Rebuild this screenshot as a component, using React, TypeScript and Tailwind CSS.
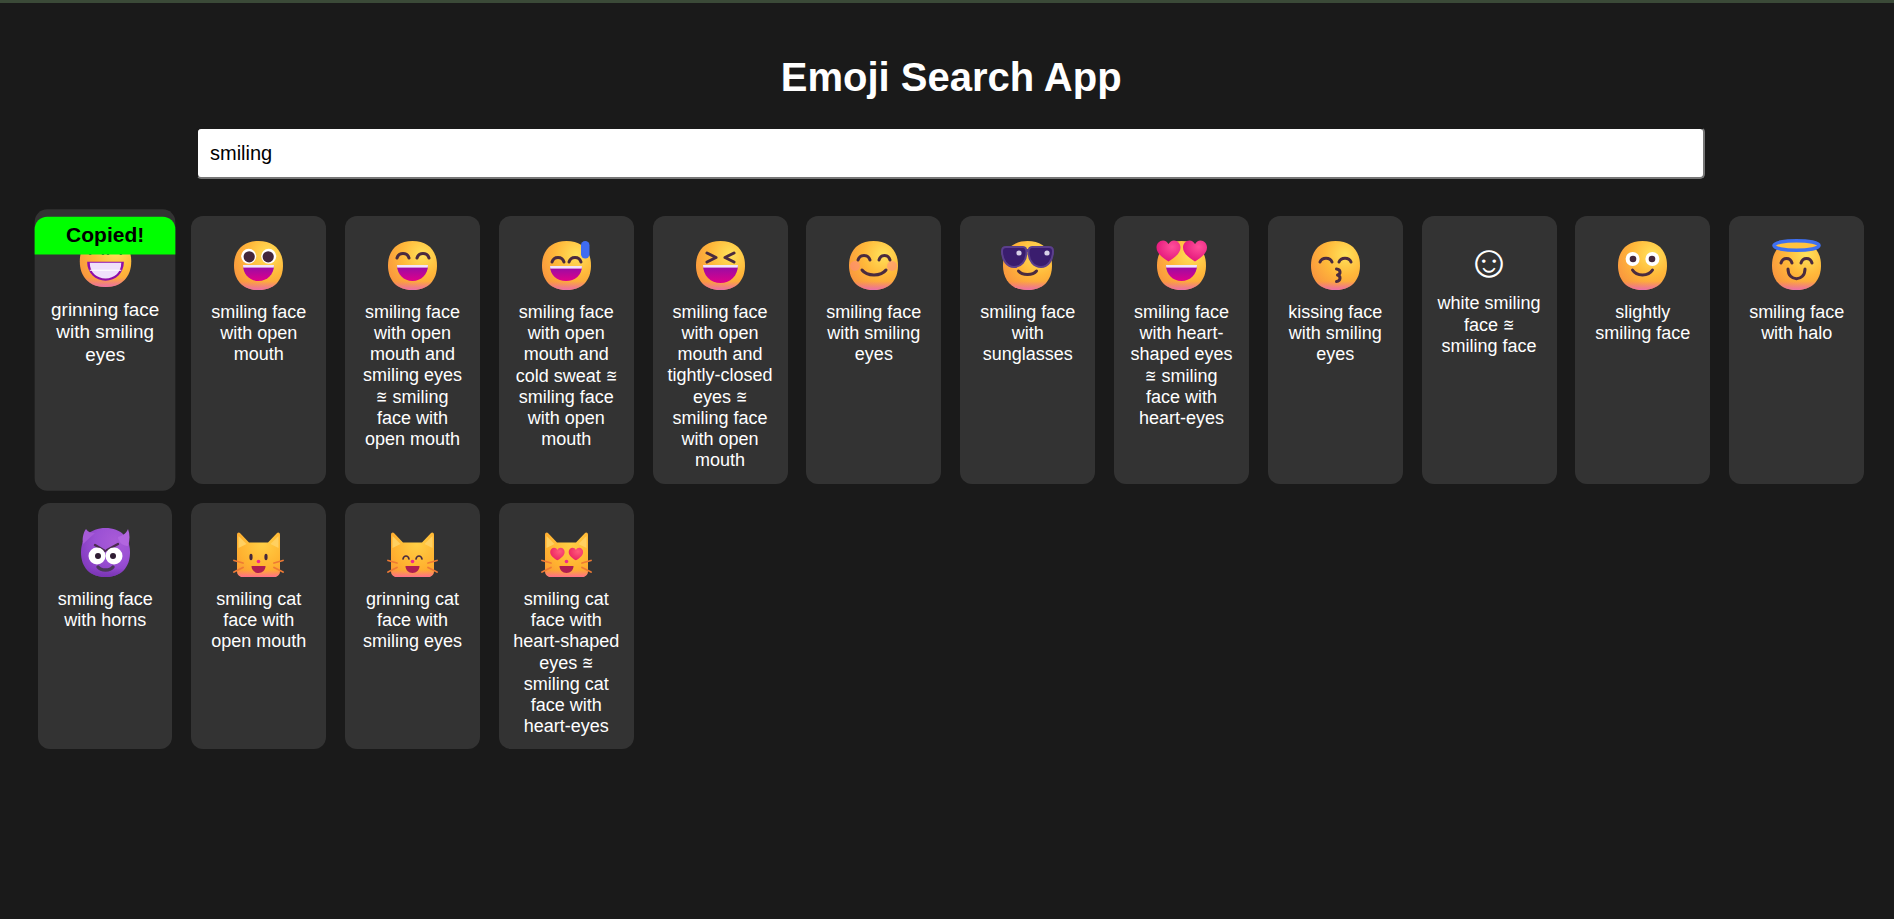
import type { ReactNode } from "react";

const INK = "#4a2b3f";

function Arc({ x, y, w = 12, h = 6, color = INK, sw = 3 }: { x: number; y: number; w?: number; h?: number; color?: string; sw?: number }) {
  return (
    <path
      d={`M${x} ${y + h}C${x + w * 0.15} ${y} ${x + w * 0.85} ${y} ${x + w} ${y + h}`}
      fill="none"
      stroke={color}
      strokeWidth={sw}
      strokeLinecap="round"
    />
  );
}

function Smile({ x, y, w, h, sw = 3 }: { x: number; y: number; w: number; h: number; sw?: number }) {
  return (
    <path
      d={`M${x} ${y}C${x + w * 0.2} ${y + h * 1.3} ${x + w * 0.8} ${y + h * 1.3} ${x + w} ${y}`}
      fill="none"
      stroke={INK}
      strokeWidth={sw}
      strokeLinecap="round"
    />
  );
}

function Mouth({ id, x = 9, y = 24, w = 31, h = 16 }: { id: string; x?: number; y?: number; w?: number; h?: number }) {
  const shape = `M${x} ${y}H${x + w}C${x + w} ${y + h * 0.6} ${x + w * 0.78} ${y + h} ${x + w / 2} ${y + h}C${x + w * 0.22} ${y + h} ${x} ${y + h * 0.6} ${x} ${y}Z`;
  return (
    <g>
      <defs>
        <linearGradient id={`${id}-mouth`} x1="0" y1="0" x2="0" y2="1">
          <stop offset="0" stopColor="#8f0ea8" />
          <stop offset="1" stopColor="#e0008a" />
        </linearGradient>
        <clipPath id={`${id}-clip`}>
          <path d={shape} />
        </clipPath>
      </defs>
      <path d={shape} fill={`url(#${id}-mouth)`} />
      <rect x={x} y={y} width={w} height="2.6" fill="#f3e4fb" clipPath={`url(#${id}-clip)`} />
    </g>
  );
}

function Heart({ id, x, y, s, from = "#ff4f9a", to = "#e00f78" }: { id: string; x: number; y: number; s: number; from?: string; to?: string }) {
  return (
    <g transform={`translate(${x} ${y}) scale(${s})`}>
      <defs>
        <radialGradient id={`${id}-heart`} cx="0.65" cy="0.3" r="0.8">
          <stop offset="0" stopColor={from} />
          <stop offset="1" stopColor={to} />
        </radialGradient>
      </defs>
      <path
        d="M11.5 20.5C7 17.5 -0.5 13 -0.5 6.5C-0.5 2.5 2.5 -0.5 6 -0.5C8.4 -0.5 10.4 1 11.5 3.2C12.6 1 14.6 -0.5 17 -0.5C20.5 -0.5 23.5 2.5 23.5 6.5C23.5 13 16 17.5 11.5 20.5Z"
        fill={`url(#${id}-heart)`}
      />
    </g>
  );
}

const FACE_SHAPE = "M24.5 0C40 0 49 9.5 49 24.5C49 39.5 40 49 24.5 49C9 49 0 39.5 0 24.5C0 9.5 9 0 24.5 0Z";

function Face({ id, purple, children }: { id: string; purple?: boolean; children?: ReactNode }) {
  return (
    <svg viewBox="0 0 49 49" className="block mx-auto w-[49px] h-[49px] overflow-visible">
      <defs>
        <radialGradient id={`${id}-base`} cx="0.7" cy="0.28" r="0.85">
          <stop offset="0" stopColor={purple ? "#a95bd8" : "#ffe25a"} />
          <stop offset="0.5" stopColor={purple ? "#9a50d4" : "#ffb83a"} />
          <stop offset="1" stopColor={purple ? "#8038bc" : "#f8923f"} />
        </radialGradient>
        <linearGradient id={`${id}-low`} x1="0" y1="0" x2="0" y2="1">
          <stop offset="0.82" stopColor={purple ? "#7a35b4" : "#f0709c"} stopOpacity="0" />
          <stop offset="1" stopColor={purple ? "#7a35b4" : "#ea6fa8"} stopOpacity="1" />
        </linearGradient>
      </defs>
      <path d={FACE_SHAPE} fill={`url(#${id}-base)`} />
      <path d={FACE_SHAPE} fill={`url(#${id}-low)`} />
      {children}
    </svg>
  );
}

const CAT_HEAD = "M3 7C3 4.5 5 4 6.2 5.2L15 14.5H34L42.8 5.2C44 4 46 4.5 46 7V43C46 46.5 43.5 49 40 49H9C5.5 49 3 46.5 3 43Z";

function Cat({ id, children }: { id: string; children?: ReactNode }) {
  const whiskers = "M0 32.5L9 35M0 44L9 39.5M49 32.5L40 35M49 44L40 39.5";
  return (
    <svg viewBox="0 0 49 49" className="block mx-auto w-[49px] h-[49px] overflow-visible">
      <defs>
        <radialGradient id={`${id}-cat`} cx="0.6" cy="0.25" r="0.85">
          <stop offset="0" stopColor="#ffcf45" />
          <stop offset="0.65" stopColor="#ffb230" />
          <stop offset="1" stopColor="#fb9a35" />
        </radialGradient>
        <linearGradient id={`${id}-catlow`} x1="0" y1="0" x2="0" y2="1">
          <stop offset="0.84" stopColor="#ff7a8a" stopOpacity="0" />
          <stop offset="1" stopColor="#ff7088" stopOpacity="1" />
        </linearGradient>
      </defs>
      <path d={CAT_HEAD} fill={`url(#${id}-cat)`} />
      <path d={CAT_HEAD} fill={`url(#${id}-catlow)`} />
      <path d="M4.5 8L12.5 16L4.5 20Z" fill="#ffd060" />
      <path d="M44.5 8L36.5 16L44.5 20Z" fill="#ffd060" />
      <path d={whiskers} fill="none" stroke="#ee7a34" strokeWidth="1.8" strokeLinecap="round" />
      <circle cx="24.5" cy="33.5" r="1.8" fill="#f0288c" />
      <path d="M17.5 38H31.5C31.5 42 28.5 45 24.5 45C20.5 45 17.5 42 17.5 38Z" fill="#b01e50" />
      {children}
    </svg>
  );
}

const emojis: { label: string; icon: ReactNode; textGlyph?: boolean }[] = [
  {
    label: "grinning face with smiling eyes",
    icon: (
      <Face id="grin">
        <Arc x={10} y={11} />
        <Arc x={27} y={11} />
        <path d="M7 25H42C42 36 34 43 24.5 43C15 43 7 36 7 25Z" fill="#8f0ea8" />
        <path d="M9.5 26H39.5C39.5 35 33 41 24.5 41C16 41 9.5 35 9.5 26Z" fill="#efe0fb" />
        <path d="M9.5 33H39.5" stroke="#fff" strokeWidth="1" />
      </Face>
    ),
  },
  {
    label: "smiling face with open mouth",
    icon: (
      <Face id="open">
        <circle cx="14.7" cy="15.3" r="7.5" fill="#fff" />
        <circle cx="34.7" cy="15.3" r="7.5" fill="#fff" />
        <circle cx="15.2" cy="15.8" r="5.6" fill="#43273b" />
        <circle cx="34.2" cy="15.8" r="5.6" fill="#43273b" />
        <Mouth id="open" />
      </Face>
    ),
  },
  {
    label: "smiling face with open mouth and smiling eyes ≊ smiling face with open mouth",
    icon: (
      <Face id="eyes">
        <Arc x={9} y={11} />
        <Arc x={29} y={11} />
        <Mouth id="eyes" />
      </Face>
    ),
  },
  {
    label: "smiling face with open mouth and cold sweat ≊ smiling face with open mouth",
    icon: (
      <Face id="sweat">
        <Arc x={10} y={15} />
        <Arc x={27} y={15} />
        <Mouth id="sweat" x={8} y={25} w={32} h={15} />
        <rect x="39" y="0" width="8.5" height="17.5" rx="4.2" fill="#3f6cf0" />
      </Face>
    ),
  },
  {
    label: "smiling face with open mouth and tightly-closed eyes ≊ smiling face with open mouth",
    icon: (
      <Face id="tight">
        <path d="M11 12L20 16.5L11 21M38 12L29 16.5L38 21" fill="none" stroke={INK} strokeWidth="3" strokeLinecap="round" strokeLinejoin="round" />
        <Mouth id="tight" x={7} y={24} w={35} h={18} />
      </Face>
    ),
  },
  {
    label: "smiling face with smiling eyes",
    icon: (
      <Face id="soft">
        <circle cx="6" cy="25" r="5" fill="#ff8a80" opacity="0.55" />
        <circle cx="43" cy="25" r="5" fill="#ff8a80" opacity="0.55" />
        <Arc x={9} y={13} />
        <Arc x={30} y={13} w={11} />
        <Smile x={13} y={29} w={24} h={5} />
      </Face>
    ),
  },
  {
    label: "smiling face with sunglasses",
    icon: (
      <Face id="shades">
        <path d="M22 9.5H27" stroke="#5b3f8c" strokeWidth="3" fill="none" />
        <path d="M-1 10C-1 7 1 6 3 6H20C23 6 23.5 8 23.5 11C23.5 20 18 26 11 26C4 26 -1 19 -1 10Z" fill="#3a1d6e" stroke="#5b3f8c" strokeWidth="2" />
        <path d="M50 10C50 7 48 6 46 6H29C26 6 25.5 8 25.5 11C25.5 20 31 26 38 26C45 26 50 19 50 10Z" fill="#3a1d6e" stroke="#5b3f8c" strokeWidth="2" />
        <circle cx="16" cy="12" r="2.6" fill="#d8d0e8" />
        <circle cx="44" cy="12" r="2.6" fill="#d8d0e8" />
        <Smile x={15.5} y={30} w={18} h={3.5} />
      </Face>
    ),
  },
  {
    label: "smiling face with heart-shaped eyes ≊ smiling face with heart-eyes",
    icon: (
      <Face id="hearts">
        <Mouth id="hearts" />
        <Heart id="hl" x={0} y={0} s={1} />
        <Heart id="hr" x={26.5} y={0} s={1} />
      </Face>
    ),
  },
  {
    label: "kissing face with smiling eyes",
    icon: (
      <Face id="kiss">
        <Arc x={9} y={16} h={5} />
        <Arc x={28} y={16} h={5} />
        <path d="M25.5 28C30 28.5 30 33 26.5 34C30 35 30 40 25.5 40.5" fill="none" stroke={INK} strokeWidth="3" strokeLinecap="round" strokeLinejoin="round" />
      </Face>
    ),
  },
  { label: "white smiling face ≊ smiling face", textGlyph: true, icon: "☺" },
  {
    label: "slightly smiling face",
    icon: (
      <Face id="slight">
        <circle cx="14.6" cy="18" r="7" fill="#fff" />
        <circle cx="34.4" cy="18" r="7" fill="#fff" />
        <circle cx="15" cy="18" r="3.3" fill="#43273b" />
        <circle cx="34" cy="18" r="3.3" fill="#43273b" />
        <Smile x={14.5} y={29} w={20} h={5} />
      </Face>
    ),
  },
  {
    label: "smiling face with halo",
    icon: (
      <Face id="halo">
        <ellipse cx="24.5" cy="4.5" rx="22.5" ry="4.8" fill="#ffc23f" stroke="#3f70f0" strokeWidth="3.6" />
        <Arc x={9} y={16} w={11} />
        <Arc x={29} y={16} w={11} />
        <path d="M16 28C16 41 33 41 33 28" fill="none" stroke={INK} strokeWidth="3" strokeLinecap="round" />
      </Face>
    ),
  },
  {
    label: "smiling face with horns",
    icon: (
      <Face id="horns" purple>
        <path d="M5 1C2 5 1 11 2 16L14 5C10 5 7 4 5 1Z" fill="#a65ad8" />
        <path d="M47 1C49 6 49 12 47 18C42 18 37 14 37 9C41 8 45 6 47 1Z" fill="#b266e0" />
        <path d="M14 17L24 23M37 16L26 22" fill="none" stroke="#4a2b4f" strokeWidth="2.4" strokeLinecap="round" />
        <circle cx="16" cy="28" r="8.5" fill="#fff" />
        <circle cx="33" cy="28" r="8.5" fill="#fff" />
        <circle cx="17" cy="28" r="3" fill="#2f1c33" />
        <circle cx="32" cy="28" r="3" fill="#2f1c33" />
        <path d="M17 39C20 43 29 43 32 39" fill="none" stroke="#4a3a58" strokeWidth="3.4" strokeLinecap="round" />
      </Face>
    ),
  },
  {
    label: "smiling cat face with open mouth",
    icon: (
      <Cat id="catopen">
        <ellipse cx="17" cy="29" rx="1.6" ry="3.2" fill="#43273b" />
        <ellipse cx="32" cy="29" rx="1.6" ry="3.2" fill="#43273b" />
      </Cat>
    ),
  },
  {
    label: "grinning cat face with smiling eyes",
    icon: (
      <Cat id="catgrin">
        <Arc x={15} y={27} w={6} h={4} sw={1.6} />
        <Arc x={28} y={27} w={6} h={4} sw={1.6} />
      </Cat>
    ),
  },
  {
    label: "smiling cat face with heart-shaped eyes ≊ smiling cat face with heart-eyes",
    icon: (
      <Cat id="cathearts">
        <Heart id="chl" x={8.5} y={20} s={0.6} from="#ff5a7a" to="#ea1d5e" />
        <Heart id="chr" x={27} y={20} s={0.6} from="#ff5a7a" to="#ea1d5e" />
      </Cat>
    ),
  },
];

function Label({ text }: { text: string }) {
  const parts = text.split("≊");
  if (parts.length === 1) return <>{text}</>;
  return (
    <>
      {parts[0]}
      <span className="inline-block -mx-[2px] scale-x-75">≊</span>
      {parts[1]}
    </>
  );
}

export default function App() {
  return (
    <div className="min-h-[919px] bg-[#1a1a1a] text-white font-['Liberation_Sans','DejaVu_Sans',sans-serif]">
      <div className="h-[3px] bg-[#3b4a38]" />
      <main className="pl-[37.4px] w-[1865px]">
        <h1 className="pt-[51px] pb-[27px] text-center text-[40px] leading-[46px] font-bold">Emoji Search App</h1>
        <input
          type="search"
          defaultValue="smiling"
          aria-label="Search emoji"
          className="block ml-[158.6px] w-[1509px] h-[52px] px-[12px] text-[20px] text-black bg-white rounded-[5px] border-2 border-[#1a1a1a] border-r-[#767676] border-b-[#767676] outline-none"
        />
        <div className="mt-[37px] grid grid-cols-[repeat(12,135px)] gap-x-[18.8px] gap-y-[19px]">
          {emojis.map((item, index) => (
            <div
              key={index}
              className={`relative rounded-[12px] bg-[#333333] px-[13px] pt-[25px] pb-[12.5px] text-center text-[18px] leading-[normal] ${index === 0 ? "scale-105" : ""} ${index % 12 === 0 ? "ml-[0.6px]" : ""}`}
            >
              {index === 0 && (
                <div className="absolute left-0 right-0 top-[7px] h-[36px] rounded-t-[12px] bg-[#00ff00] text-[20px] leading-[35px] font-bold text-black">
                  Copied!
                </div>
              )}
              {item.textGlyph ? (
                <div className="h-[40px] text-[46px] leading-[40px]">{item.icon}</div>
              ) : (
                <div className="h-[49px]">{item.icon}</div>
              )}
              <p className="mt-[12px]">
                <Label text={item.label} />
              </p>
            </div>
          ))}
        </div>
      </main>
    </div>
  );
}
